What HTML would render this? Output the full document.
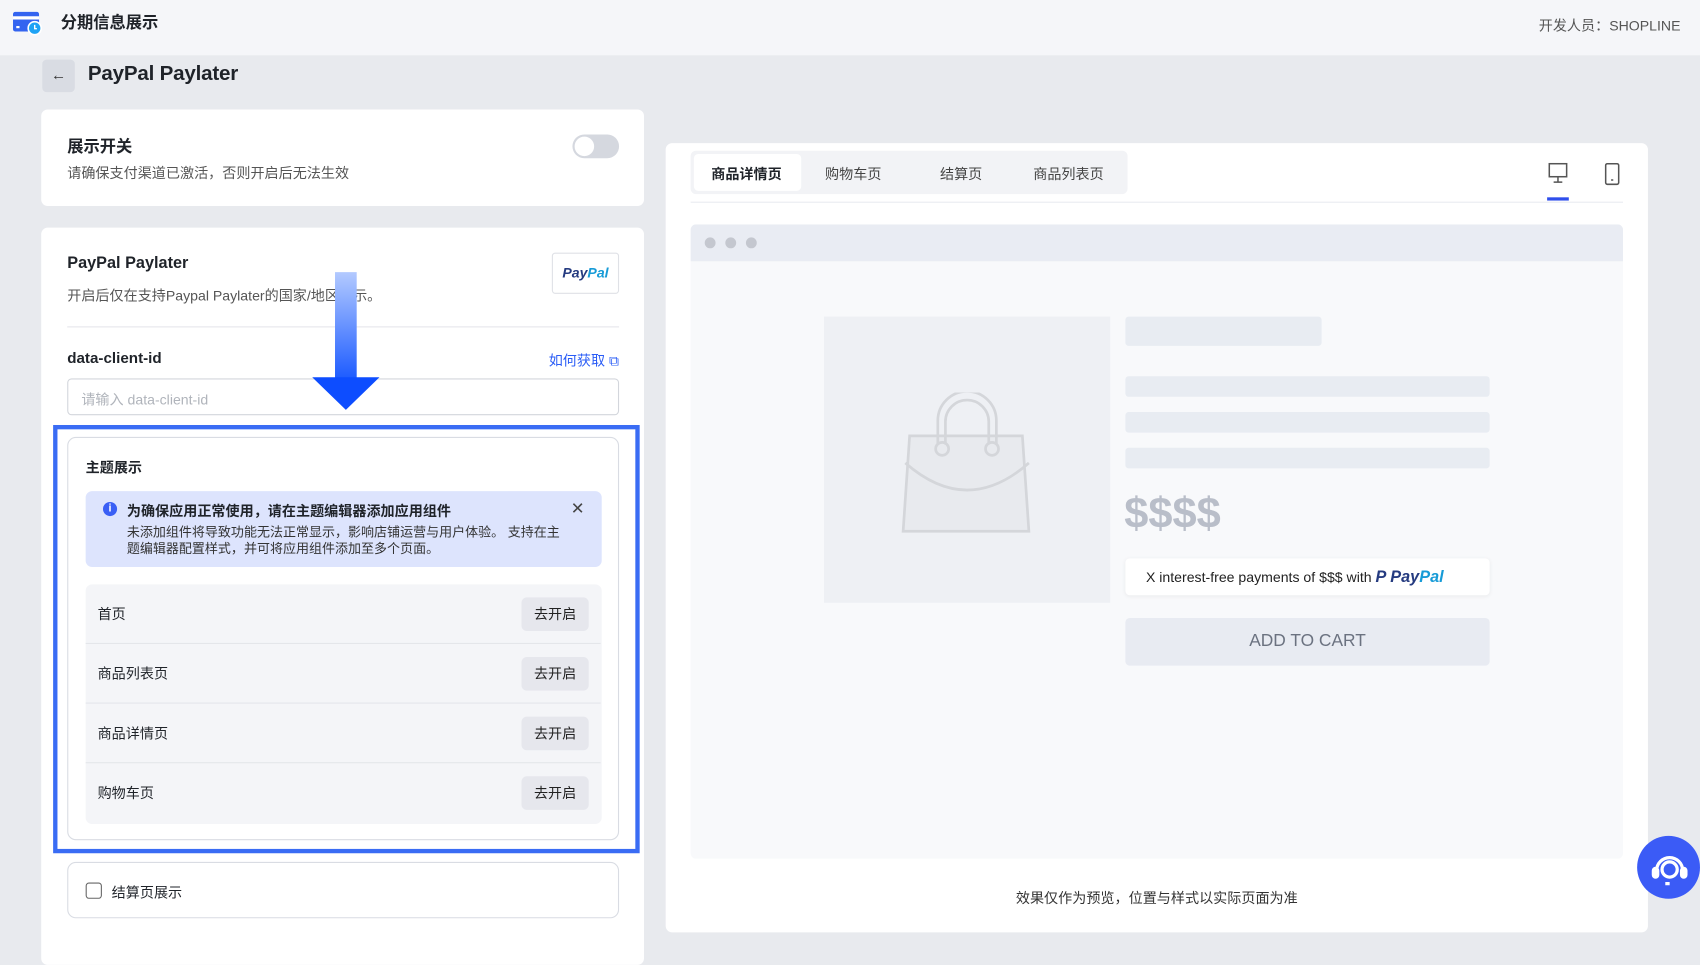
<!DOCTYPE html>
<html><head><meta charset="utf-8"><style>
*{box-sizing:border-box;margin:0;padding:0}
html,body{width:1700px;height:938px;overflow:hidden;background:#e8eaee;font-family:"Liberation Sans","Noto Sans CJK SC",sans-serif;color:#1f2329}
#w{position:absolute;left:0;top:0;width:1568px;height:865px;transform:scale(1.08418);transform-origin:0 0}
.a{position:absolute}
.card{position:absolute;background:#fff;border-radius:6px}
.btn{position:absolute;left:402px;width:62px;height:31px;background:#e6e7ed;border-radius:5px;font-size:13px;text-align:center;line-height:31px;color:#222}
.row{position:absolute;left:0;width:475px;height:55px;border-bottom:1px solid #e4e6ea}
.row span{position:absolute;left:11px;top:17px;font-size:13px}
.sk{position:absolute;background:#e8ecf2;border-radius:3px}
</style></head><body><div id="w">
<div class="a" style="left:0;top:0;width:1568px;height:51px;background:#f5f6f9"></div>
<svg class="a" style="left:11px;top:9px" width="28" height="24" viewBox="0 0 28 24"><rect x="1" y="2" width="24" height="18" rx="2" fill="#3464f0"/><rect x="1" y="6" width="24" height="3" fill="#fff"/><rect x="4" y="15" width="3" height="2" fill="#fff"/><circle cx="21" cy="17" r="6" fill="#1fa3f5" stroke="#fff" stroke-width="1.5"/><path d="M21 14v3.5h2" stroke="#fff" stroke-width="1.3" fill="none"/></svg>
<div class="a" style="left:56px;top:10px;font-size:15px;font-weight:bold">分期信息展示</div>
<div class="a" style="right:18px;top:13px;font-size:13px;color:#555">开发人员：SHOPLINE</div>
<div class="a" style="left:39px;top:55px;width:30px;height:30px;background:#d9dce3;border-radius:4px;text-align:center;line-height:28px;font-size:14px;color:#333">←</div>
<div class="a" style="left:81px;top:58px;font-size:19px;font-weight:bold;letter-spacing:-0.2px">PayPal Paylater</div>

<div class="card" style="left:38px;top:101px;width:556px;height:89px">
<div class="a" style="left:24px;top:23px;font-size:15px;font-weight:bold">展示开关</div>
<div class="a" style="left:24px;top:48px;font-size:13px;color:#555">请确保支付渠道已激活，否则开启后无法生效</div>
<div class="a" style="left:490px;top:23px;width:43px;height:22px;border-radius:11px;background:#d5d8df"><div class="a" style="left:2px;top:2px;width:18px;height:18px;border-radius:9px;background:#fff"></div></div>
</div>

<div class="card" style="left:38px;top:210px;width:556px;height:680px">
<div class="a" style="left:24px;top:24px;font-size:15px;font-weight:600">PayPal Paylater</div>
<div class="a" style="left:24px;top:52px;font-size:13px;color:#555">开启后仅在支持Paypal Paylater的国家/地区显示。</div>
<div class="a" style="left:471px;top:23px;width:62px;height:38px;border:1px solid #dfe1e6;border-radius:3px;text-align:center;line-height:36px;font-size:13px;font-style:italic;font-weight:bold"><span style="color:#253b80">Pay</span><span style="color:#179bd7">Pal</span></div>
<div class="a" style="left:24px;top:91px;width:509px;height:1px;background:#e5e6eb"></div>
<div class="a" style="left:24px;top:112px;font-size:14px;font-weight:bold">data-client-id</div>
<div class="a" style="right:23px;top:112px;font-size:13px;color:#2a5cf6">如何获取 ⧉</div>
<div class="a" style="left:24px;top:139px;width:509px;height:34px;border:1px solid #d3d6dc;border-radius:4px;font-size:13px;color:#b0b4bb;padding:8px 12px">请输入 data-client-id</div>
</div>

<div class="a" style="left:309px;top:251px;width:20px;height:98px;background:linear-gradient(#b3caff,#1e5cff)"></div>
<div class="a" style="left:288px;top:348px;width:0;height:0;border-left:31px solid transparent;border-right:31px solid transparent;border-top:30px solid #0d4dff"></div>

<div class="a" style="left:49px;top:392px;width:541px;height:395px;border:4px solid #3a6cf4"></div>
<div class="a" style="left:62px;top:403px;width:509px;height:372px;border:1px solid #d9dce3;border-radius:8px;background:#fff">
<div class="a" style="left:16px;top:17px;font-size:13px;font-weight:bold">主题展示</div>
<div class="a" style="left:16px;top:49px;width:476px;height:70px;background:#dde4fd;border-radius:6px">
<div class="a" style="left:16px;top:10px;width:13px;height:13px;border-radius:7px;background:#3a5ff5;color:#fff;font-size:10px;text-align:center;line-height:13px;font-weight:bold">i</div>
<div class="a" style="left:38px;top:8px;font-size:13px;font-weight:bold">为确保应用正常使用，请在主题编辑器添加应用组件</div>
<div class="a" style="left:38px;top:31px;font-size:12px;line-height:15px;color:#333;width:400px">未添加组件将导致功能无法正常显示，影响店铺运营与用户体验。 支持在主题编辑器配置样式，并可将应用组件添加至多个页面。</div>
<div class="a" style="right:16px;top:7px;font-size:15px;color:#444">✕</div>
</div>
<div class="a" style="left:16px;top:135px;width:476px;height:221px;background:#f4f5f8;border-radius:6px">
<div class="row" style="top:0"><span>首页</span><div class="btn" style="top:12px">去开启</div></div>
<div class="row" style="top:55px"><span>商品列表页</span><div class="btn" style="top:12px">去开启</div></div>
<div class="row" style="top:110px"><span>商品详情页</span><div class="btn" style="top:12px">去开启</div></div>
<div class="row" style="top:165px;border:0"><span>购物车页</span><div class="btn" style="top:12px">去开启</div></div>
</div>
</div>
<div class="a" style="left:62px;top:795px;width:509px;height:52px;border:1px solid #d9dce3;border-radius:8px;background:#fff">
<div class="a" style="left:16px;top:18px;width:15px;height:15px;border:1.5px solid #666;border-radius:3px"></div>
<div class="a" style="left:40px;top:17px;font-size:13px">结算页展示</div>
</div>

<div class="card" style="left:614px;top:132px;width:906px;height:728px">
<div class="a" style="left:23px;top:7px;width:403px;height:40px;background:#f2f3f6;border-radius:5px"></div>
<div class="a" style="left:26px;top:10px;width:99px;height:34px;background:#fff;border-radius:4px"></div>
<div class="a" style="left:42px;top:18px;font-size:13px;font-weight:600">商品详情页</div>
<div class="a" style="left:147px;top:18px;font-size:13px;color:#444">购物车页</div>
<div class="a" style="left:253px;top:18px;font-size:13px;color:#444">结算页</div>
<div class="a" style="left:339px;top:18px;font-size:13px;color:#444">商品列表页</div>
<div class="a" style="left:23px;top:54px;width:860px;height:1px;background:#e9ebf0"></div>
<svg class="a" style="left:813px;top:18px" width="20" height="20" viewBox="0 0 20 20" fill="none" stroke="#555" stroke-width="1.4"><rect x="2" y="1" width="16" height="12"/><path d="M10 13v5M6 18h8"/></svg>
<div class="a" style="left:813px;top:50px;width:20px;height:3px;background:#2f4fec"></div>
<svg class="a" style="left:865px;top:18px" width="16" height="22" viewBox="0 0 16 22" fill="none" stroke="#555" stroke-width="1.4"><rect x="2" y="1" width="12" height="19" rx="1.5"/><path d="M7 16h2"/></svg>
<div class="a" style="left:23px;top:75px;width:860px;height:585px;background:#f8f9fb;border-radius:5px;overflow:hidden">
<div class="a" style="left:0;top:0;width:860px;height:34px;background:#e9ecf3"></div>
<div class="a" style="left:13px;top:12px;width:10px;height:10px;border-radius:5px;background:#c4c7cf"></div>
<div class="a" style="left:32px;top:12px;width:10px;height:10px;border-radius:5px;background:#c4c7cf"></div>
<div class="a" style="left:51px;top:12px;width:10px;height:10px;border-radius:5px;background:#c4c7cf"></div>
<div class="a" style="left:123px;top:85px;width:264px;height:264px;background:#eef0f4"></div>
<svg class="a" style="left:190px;top:155px" width="130" height="130" viewBox="0 0 130 130" fill="none" stroke="#d4d6da" stroke-width="2.5"><path d="M12 40h104l6 88H6z" fill="#e8eaee"/><path d="M38 48V26a27 27 0 0 1 54 0v22"/><path d="M45 48V27a20 20 0 0 1 40 0v21"/><circle cx="42" cy="52" r="6"/><circle cx="88" cy="52" r="6"/><path d="M8 65q57 50 114 0"/></svg>
<div class="sk" style="left:401px;top:85px;width:181px;height:27px"></div>
<div class="sk" style="left:401px;top:140px;width:336px;height:19px"></div>
<div class="sk" style="left:401px;top:173px;width:336px;height:19px"></div>
<div class="sk" style="left:401px;top:206px;width:336px;height:19px"></div>
<div class="a" style="left:400px;top:245px;font-size:40px;font-weight:bold;color:#b9bec9">$$$$</div>
<div class="a" style="left:401px;top:308px;width:336px;height:34px;background:#fff;border-radius:4px;box-shadow:0 1px 4px rgba(0,0,0,.06);font-size:13px;padding:9px 0 0 19px;color:#222">X interest-free payments of $$$ with <b style="font-style:italic;font-size:15px;color:#253b80">P Pay<span style="color:#179bd7">Pal</span></b></div>
<div class="a" style="left:401px;top:363px;width:336px;height:44px;background:#e8ebf2;border-radius:4px;text-align:center;line-height:44px;font-size:16px;color:#6b7280">ADD TO CART</div>
</div>
<div class="a" style="left:0;width:906px;top:686px;text-align:center;font-size:13px;color:#333">效果仅作为预览，位置与样式以实际页面为准</div>
</div>
<div class="a" style="left:1510px;top:771px;width:58px;height:58px;border-radius:29px;background:#3b5bf6"></div>
<svg class="a" style="left:1520px;top:781px" width="40" height="40" viewBox="0 0 40 40" fill="none" stroke="#fff" stroke-width="3"><path d="M8 22a12 12 0 0 1 24 0"/><circle cx="20" cy="21" r="7"/><path d="M20 34h-4"/><rect x="5" y="20" width="4" height="8" rx="2" fill="#fff"/><rect x="31" y="20" width="4" height="8" rx="2" fill="#fff"/></svg>
</div></body></html>
